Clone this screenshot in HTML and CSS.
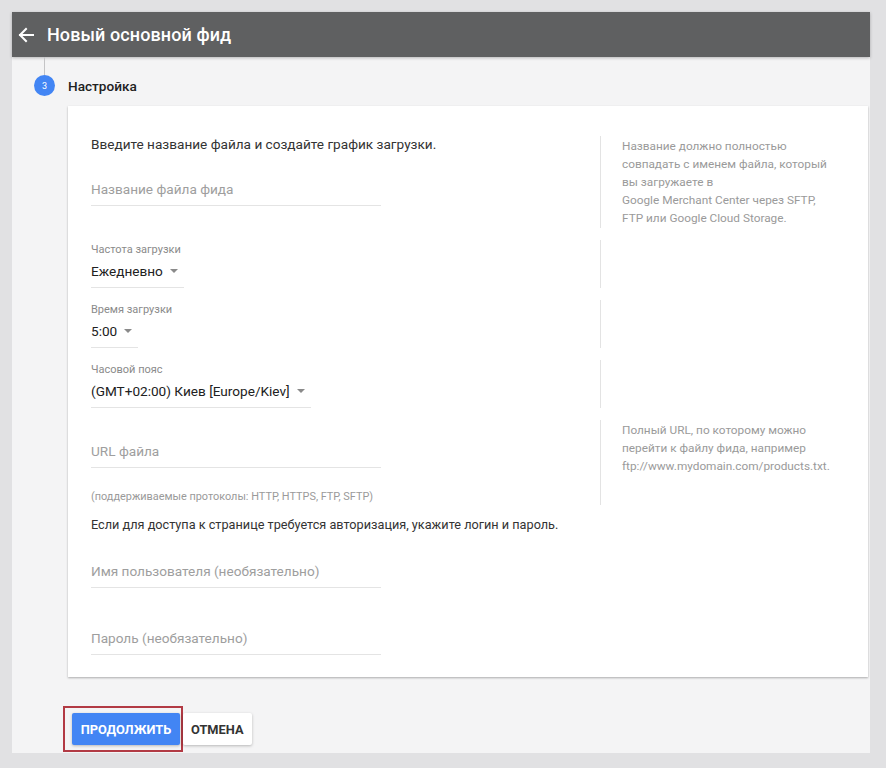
FILE: index.html
```html
<!DOCTYPE html>
<html lang="ru">
<head>
    <meta charset="UTF-8">
    <meta name="viewport" content="width=device-width, initial-scale=1.0">
    <title>Новый основной фид</title>
    <link rel="stylesheet" href="styles.css">
</head>
<body class="page">
    <div class="panel">

        <header class="topbar">
            <svg class="topbar__back" xmlns="http://www.w3.org/2000/svg" width="16" height="16" viewBox="0 0 16 16" fill="none" stroke="currentColor" stroke-width="2" stroke-linecap="square">
                <path d="M15 8H2"></path>
                <path d="M8 2L2 8l6 6"></path>
            </svg>
            <h1 class="topbar__title">Новый основной фид</h1>
        </header>

        <div class="step">
            <span class="step__num">3</span>
            <h2 class="step__title">Настройка</h2>
        </div>

        <div class="card">
            <div class="row row--first">
                <div class="row__main">
                    <p class="text">Введите название файла и создайте график загрузки.</p>
                    <div class="field field--wide field--first">Название файла фида</div>
                </div>
                <div class="hint">
                    Название должно полностью<br>
                    совпадать с именем файла, который<br>
                    вы загружаете в<br>
                    Google Merchant Center через SFTP,<br>
                    FTP или Google Cloud Storage.
                </div>
            </div>

            <div class="row row--select">
                <div class="row__main">
                    <p class="label">Частота загрузки</p>
                    <div class="select">Ежедневно <span class="select__caret"></span></div>
                </div>
                <div class="hint"></div>
            </div>

            <div class="row row--select">
                <div class="row__main">
                    <p class="label">Время загрузки</p>
                    <div class="select">5:00 <span class="select__caret"></span></div>
                </div>
                <div class="hint"></div>
            </div>

            <div class="row row--select">
                <div class="row__main">
                    <p class="label">Часовой пояс</p>
                    <div class="select">(GMT+02:00) Киев [Europe/Kiev] <span class="select__caret"></span></div>
                </div>
                <div class="hint"></div>
            </div>

            <div class="row row--url">
                <div class="row__main">
                    <div class="field field--wide">URL файла</div>
                    <p class="note">(поддерживаемые протоколы: HTTP, HTTPS, FTP, SFTP)</p>
                </div>
                <div class="hint">
                    Полный URL, по которому можно<br>
                    перейти к файлу фида, например<br>
                    ftp://www.mydomain.com/products.txt.
                </div>
            </div>

            <div class="row row--auth">
                <div class="row__main">
                    <p class="text text--small">Если для доступа к странице требуется авторизация, укажите логин и пароль.</p>
                    <div class="field field--wide field--user">Имя пользователя (необязательно)</div>
                    <div class="field field--wide field--pass">Пароль (необязательно)</div>
                </div>
            </div>
        </div>

        <div class="actions">
            <div class="actions__mark">
                <button class="btn btn--primary">Продолжить</button>
            </div>
            <button class="btn">Отмена</button>
        </div>

    </div>
</body>
</html>
```

FILE: styles.css
```css
body{
    font-family: Roboto, "Noto Sans", sans-serif;
    margin: 0;
    background: #e1e1e3;
}
*, ::after, ::before {
    box-sizing: border-box;
}
p,h1,h2{
    margin: 0;
}
.panel{
    width: 858px;
    height: 741px;
    margin: 12px 0 0 12px;
    background: #f4f4f5;
    padding: 0 2px 0 56px;
}

/* top bar */
.topbar{
    display: flex;
    align-items: center;
    height: 45px;
    margin-left: -56px;
    margin-right: -2px;
    padding-left: 6px;
    background: #5f6061;
    color: #fff;
    box-shadow: 0 1px 3px rgba(0, 0, 0, .25);
}
.topbar__back{
    margin-right: 13px;
}
.topbar__title{
    font-size: 18px;
    font-weight: 500;
    letter-spacing: .1px;
}

/* step header */
.step{
    position: relative;
    display: flex;
    align-items: center;
    height: 49px;
    margin-left: -34px;
    padding-top: 8px;
}
.step::before{
    content: "";
    position: absolute;
    left: 10px;
    top: 0;
    height: 18px;
    border-left: 1px solid #c4c4c6;
}
.step__num{
    display: flex;
    align-items: center;
    justify-content: center;
    width: 21px;
    height: 21px;
    margin-left: 0;
    border-radius: 50%;
    background: #4285f4;
    color: #fff;
    font-size: 9px;
}
.step__title{
    margin-left: 13px;
    font-size: 13.6px;
    font-weight: 500;
    color: #212121;
}

/* form card */
.card{
    background: #fff;
    height: 571px;
    padding: 30px 0 0 23px;
    box-shadow: 0 1px 2px rgba(0, 0, 0, .3);
    display: flex;
    flex-direction: column;
    gap: 12px;
}
.row{
    display: grid;
    grid-template-columns: 509px 1fr;
}
.row--first{
    height: 92px;
}
.row--select{
    height: 48px;
    padding-top: 3px;
}
.row--url{
    height: 85px;
    padding-top: 21px;
}
.hint{
    border-left: 1px solid #e3e3e3;
    padding: 1px 0 0 21px;
    font-size: 11.8px;
    line-height: 18px;
    color: #9a9a9a;
}
.row--url .hint{
    margin-top: -21px;
    padding-top: 1px;
}
.row--select .hint{
    margin-top: -3px;
}
.text{
    font-size: 13.6px;
    line-height: 16px;
    color: #333;
}
.text--small{
    font-size: 12.7px;
}
.label{
    font-size: 11px;
    line-height: 14px;
    color: #8a8a8a;
    margin-bottom: 4px;
}
.note{
    margin-top: 22px;
    font-size: 10.9px;
    line-height: 14px;
    color: #9a9a9a;
}
.field{
    font-size: 13.6px;
    line-height: 20px;
    color: #9e9e9e;
    padding-bottom: 6px;
    border-bottom: 1px solid #e4e4e4;
}
.field--wide{
    width: 290px;
}
.field--first{
    margin-top: 27px;
}
.field--user{
    margin-top: 28px;
}
.field--pass{
    margin-top: 40px;
}
.select{
    display: inline-flex;
    align-items: center;
    font-size: 13.6px;
    line-height: 20px;
    color: #212121;
    padding: 0 6px 6px 0;
    border-bottom: 1px solid #e4e4e4;
}
.select__caret{
    margin-left: 7px;
    border-left: 4px solid transparent;
    border-right: 4px solid transparent;
    border-top: 4px solid #8a8a8a;
}

/* buttons */
.actions{
    display: flex;
    align-items: center;
    margin: 29px 0 0 -5px;
}
.actions__mark{
    border: 2px solid #b23a44;
    padding: 5px 1px 5px 7px;
}
.btn{
    height: 32px;
    padding: 0 8px;
    border: 0;
    border-radius: 2px;
    background: #fff;
    font-family: inherit;
    font-size: 12.8px;
    font-weight: 700;
    text-transform: uppercase;
    color: #333;
    box-shadow: 0 1px 3px rgba(0, 0, 0, .25);
}
.btn--primary{
    display: block;
    width: 108px;
    padding: 0;
    background: #4285f4;
    color: #fff;
}
```
